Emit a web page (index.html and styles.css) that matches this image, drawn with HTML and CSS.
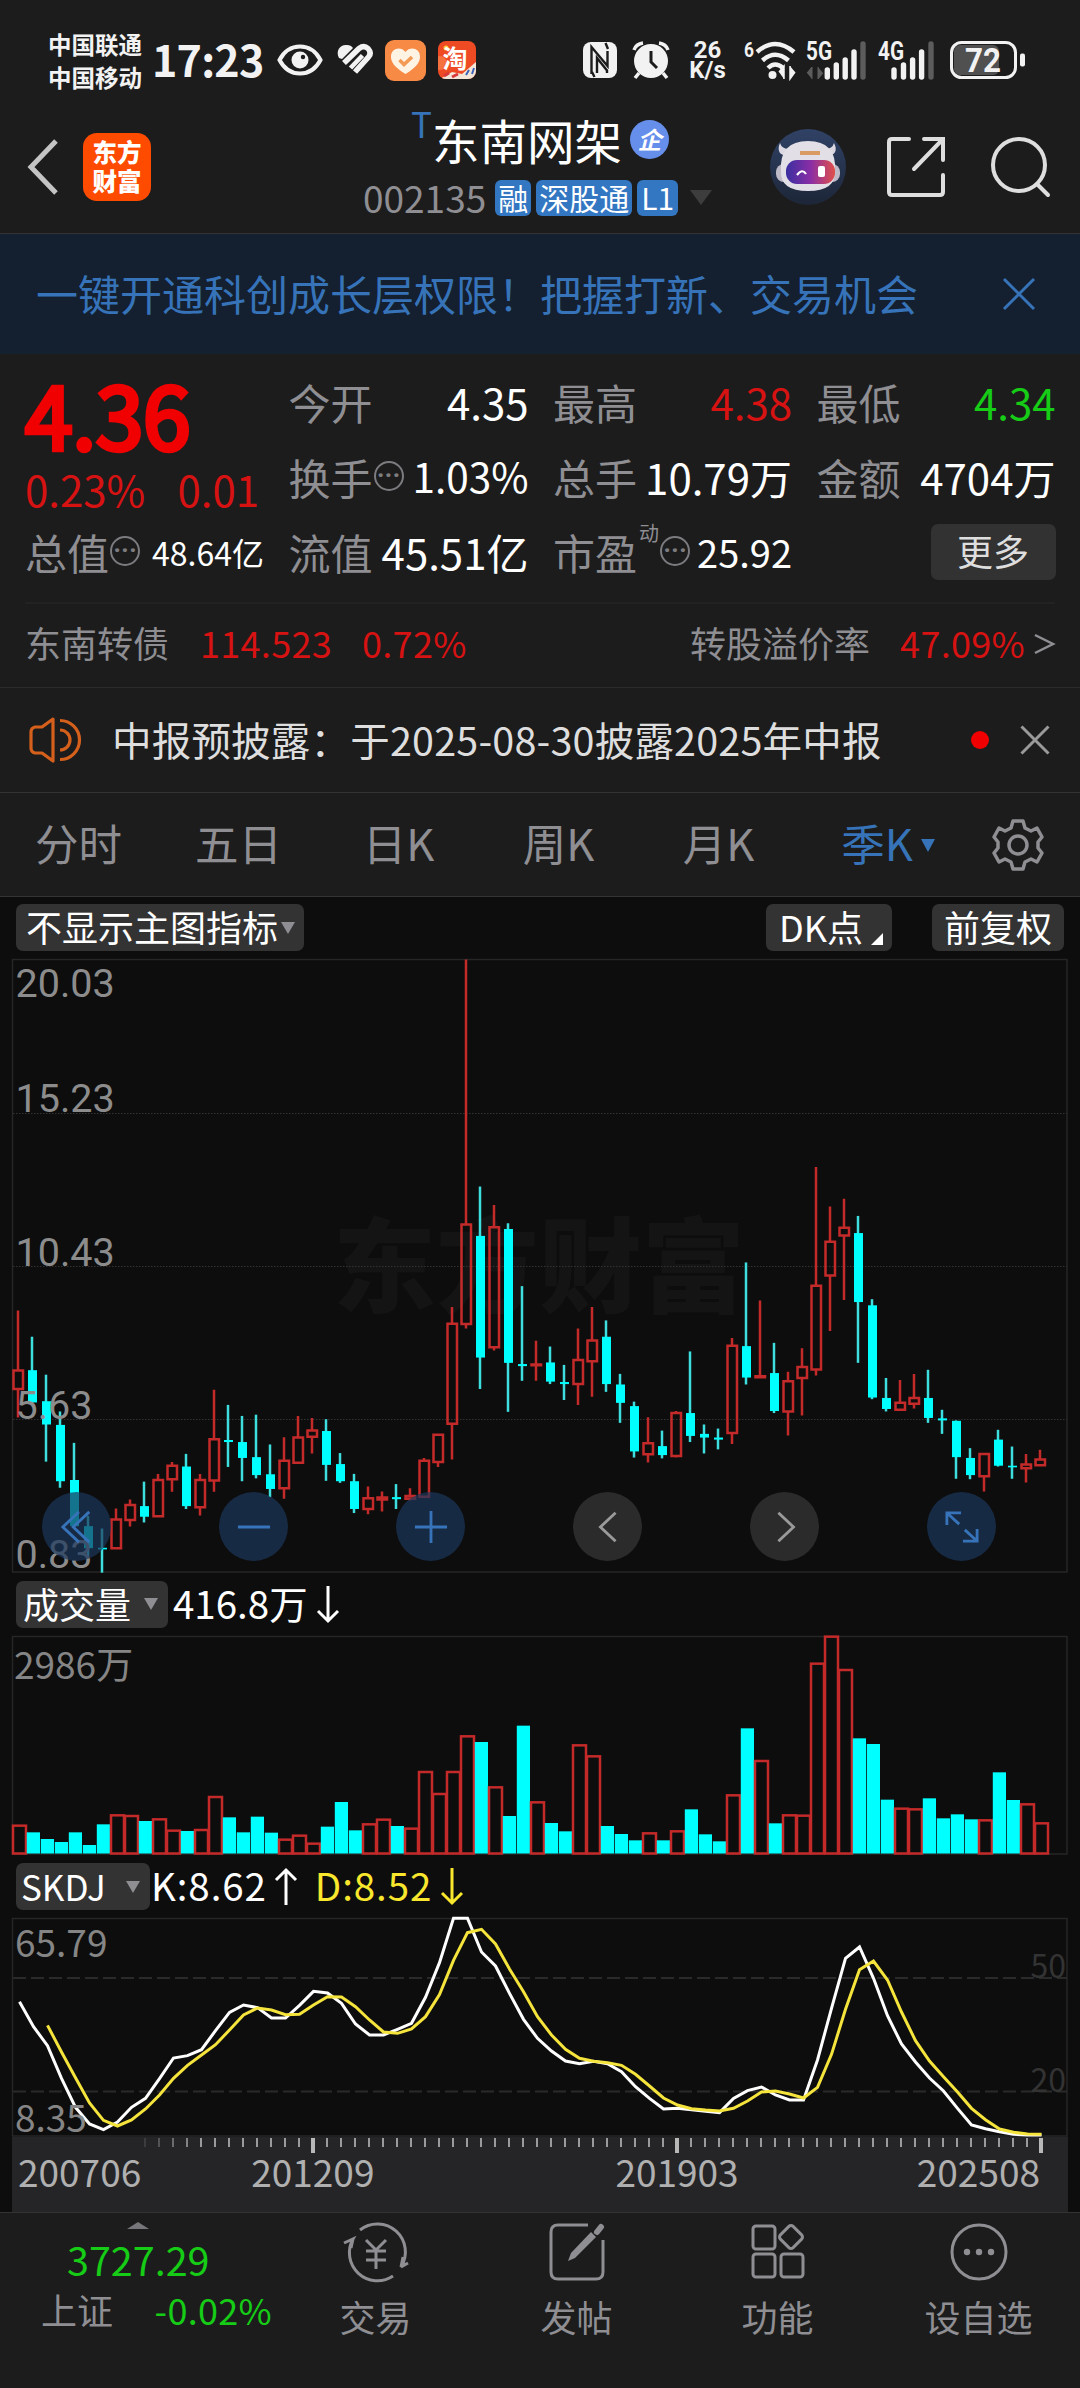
FILE: index.html
```html
<!DOCTYPE html>
<html lang="zh-CN">

<head>
  <meta charset="UTF-8" />
  <meta name="viewport" content="width=device-width, initial-scale=1.0" />
  <title>东南网架 002135</title>
  <link rel="stylesheet" href="styles.css">
</head>

<body>
  <div class="status-bar">
    <div class="carriers"><span>中国联通</span><span>中国移动</span></div>
    <div class="clock">17:23</div>
    <svg class="st-eye" width="46" height="32" viewBox="0 0 46 32">
      <path d="M2.5 16C12 -2 34 -2 43.500 16C34 34 12 34 2.500 16Z" fill="none" stroke="#f2f2f2" stroke-width="4" />
      <circle cx="23" cy="16" r="8.500" fill="#f2f2f2" />
      <circle cx="26" cy="13" r="2.200" fill="#1c1c1c" />
    </svg>
    <svg class="st-heart" width="36" height="32" viewBox="0 0 36 32">
      <path d="M2 14C-2 6 4 0 10 1Q14 1 16 4L5 15Z" fill="#f2f2f2" />
      <path d="M7 19L22 4.500Q27 1 31 4.500Q35 9 31.500 13L18 28" fill="none" stroke="#f2f2f2" stroke-width="5.600" stroke-linejoin="round" />
      <path d="M13.500 24L25.500 11.500" stroke="#f2f2f2" stroke-width="4.600" />
    </svg>
    <svg class="st-app" width="41" height="41" viewBox="0 0 41 41">
      <rect width="41" height="41" rx="9" fill="#f78a45" />
      <path d="M20.500 34C9 27 6 22 6 16.500C6 8 16 6 20.500 12C25 6 35 8 35 16.500C35 22 32 27 20.500 34Z" fill="#fff3e4" />
      <path d="M14.500 20L19 24.500L27 17" fill="none" stroke="#f39a54" stroke-width="3.500" />
    </svg>
    <svg class="st-app2" width="38" height="38" viewBox="0 0 38 38">
      <defs><clipPath id="tb"><rect width="38" height="38" rx="8" /></clipPath></defs>
      <g clip-path="url(#tb)">
        <rect width="38" height="38" fill="#ee4a24" />
        <circle cx="2" cy="22" r="7" fill="#f5713e" />
        <path d="M2 38L14 31L24 33L38 21V38Z" fill="#f3e6d8" />
        <path d="M6 35L11 32M14 36L20 33" stroke="#d83a3a" stroke-width="3" />
        <path d="M28 34L31 29M34 33L36 27" stroke="#3d63b8" stroke-width="2" />
        <circle cx="8" cy="7" r="2.500" fill="#ffcf3a" />
      </g>
      <text x="4.500" y="27" class="tb-text">淘</text>
    </svg>
    <div class="status-right">
      <svg width="34" height="36" viewBox="0 0 34 36">
        <rect x="0" y="0" width="34" height="36" rx="8" fill="#f2f2f2" />
        <path d="M8.500 32V5L24.500 24V9M11.500 35L9 30M22.500 1L25 7M14 31V16L24 28.500V31" fill="none" stroke="#1c1c1c" stroke-width="2.400" />
      </svg>
      <svg class="alarm" width="38" height="38" viewBox="0 0 38 38">
        <circle cx="19" cy="20" r="17" fill="#f2f2f2" />
        <path d="M2 9Q4 3 11 2M36 9Q34 3 27 2M7 32L3 37M31 32L35 37" fill="none" stroke="#f2f2f2" stroke-width="3.500" />
        <path d="M19 10V21L25 27" fill="none" stroke="#1c1c1c" stroke-width="3" />
      </svg>
      <div class="netspeed"><span>26</span><span>K/s</span></div>
      <svg class="wifi" width="53" height="42" viewBox="0 0 53 42">
        <text x="0" y="18" class="st-text" font-size="20" textLength="10" lengthAdjust="spacingAndGlyphs">6</text>
        <path d="M13 13Q31 -3 50 13M18.500 21.500Q31 10 44.500 21.500M24 29Q31 22 39 29" fill="none" stroke="#f2f2f2" stroke-width="4.500" />
        <circle cx="28.500" cy="36" r="4" fill="#f2f2f2" />
        <path d="M35 33L40 27V40M51 33L46 40V27" fill="#f2f2f2" stroke="#f2f2f2" stroke-width="1.500" />
      </svg>
      <svg class="signal" width="62" height="40" viewBox="0 0 62 40">
        <text x="0" y="20" class="st-text" font-size="25" textLength="26" lengthAdjust="spacingAndGlyphs">5G</text>
        <path d="M1 33L6 27V39M17 33L12 39V27" fill="#5c5c5c" stroke="#5c5c5c" />
        <path d="M21.300 30V37M30.300 25V37M39.200 20V37M48 12V37" stroke="#f2f2f2" stroke-width="5.400" stroke-linecap="round" />
        <path d="M57 4V37" stroke="#5c5c5c" stroke-width="5.400" stroke-linecap="round" />
      </svg>
      <svg class="signal2" width="58" height="40" viewBox="0 0 58 40">
        <text x="0" y="20" class="st-text" font-size="25" textLength="26" lengthAdjust="spacingAndGlyphs">4G</text>
        <path d="M16 30V37M25.500 25V37M34.600 20V37M43.600 12V37" stroke="#f2f2f2" stroke-width="5.400" stroke-linecap="round" />
        <path d="M53 4V37" stroke="#5c5c5c" stroke-width="5.400" stroke-linecap="round" />
      </svg>
      <svg class="battery" width="76" height="38" viewBox="0 0 76 38">
        <rect x="4" y="4" width="45" height="30" rx="6" fill="#505050" />
        <rect x="1.500" y="1.500" width="64" height="35" rx="10" fill="none" stroke="#f2f2f2" stroke-width="3" />
        <rect x="70" y="12.500" width="5" height="13" rx="2" fill="#f2f2f2" />
        <text x="15" y="30.500" class="st-text" font-size="33" textLength="36" lengthAdjust="spacingAndGlyphs">72</text>
      </svg>
    </div>
  </div>

  <div class="header">
    <svg class="back" width="32" height="58" viewBox="0 0 32 58">
      <path d="M29 3L4 29L29 55" fill="none" stroke="#c4c4c4" stroke-width="5" />
    </svg>
    <div class="logo"><span>东方</span><span>财富</span></div>
    <div class="stock">
      <div class="stock-name"><sup>T</sup>东南网架<i>企</i></div>
      <div class="stock-code">002135<b>融</b><b>深股通</b><b class="lv">L1</b><span class="caret"></span></div>
    </div>
    <svg class="robot" width="76" height="76" viewBox="0 0 76 76">
      <defs>
        <linearGradient id="visor" x1="0" x2="1" y1="0" y2="0">
          <stop offset="0" stop-color="#3a2fa0" />
          <stop offset="0.500" stop-color="#8a2ea6" />
          <stop offset="1" stop-color="#e0504a" />
        </linearGradient>
        <linearGradient id="halo" x1="0" x2="0" y1="0" y2="1">
          <stop offset="0" stop-color="#304266" />
          <stop offset="1" stop-color="#1d2638" />
        </linearGradient>
      </defs>
      <circle cx="38" cy="38" r="38" fill="url(#halo)" />
      <path d="M18 27Q5 26 10 14Q12 21 22 20ZM56 27Q70 26 64 14Q62 21 53 20Z" fill="#dcd8e2" />
      <rect x="6" y="35" width="64" height="18" rx="8" fill="#bfbac8" />
      <path d="M11 42Q9 12 38 12Q67 12 65 42Q66 62 38 62Q10 62 11 42Z" fill="#e2dfe6" />
      <path d="M30 24H50" stroke="#d99b62" stroke-width="4" />
      <rect x="16" y="31" width="49" height="24" rx="11" fill="url(#visor)" />
      <path d="M27 46Q32 39 36 45" fill="none" stroke="#fff" stroke-width="2.200" />
      <rect x="48" y="37" width="7" height="11" rx="2" fill="#fff" />
    </svg>
    <svg class="share" width="58" height="60" viewBox="0 0 58 60">
      <path d="M22 2H5Q2 2 2 5V55Q2 58 5 58H53Q56 58 56 55V38M37 2H56V23M56 2L27 32" fill="none" stroke="#dedede" stroke-width="4" stroke-linecap="round" />
    </svg>
    <svg class="search" width="60" height="62" viewBox="0 0 60 62">
      <circle cx="28" cy="29" r="26" fill="none" stroke="#dedede" stroke-width="4" />
      <path d="M46 48L57 59" stroke="#dedede" stroke-width="4" stroke-linecap="round" />
    </svg>
  </div>

  <div class="banner">
    <span>一键开通科创成长层权限！把握打新、交易机会</span>
    <svg width="34" height="34" viewBox="0 0 34 34"><path d="M2 2L32 32M32 2L2 32" stroke="#3673b9" stroke-width="3" /></svg>
  </div>

  <div class="quote">
    <div class="price-box">
      <div class="price">4.36</div>
      <div class="change"><span>0.23%</span><span>0.01</span></div>
    </div>
    <div class="item"><label>今开</label><em>4.35</em></div>
    <div class="item"><label>最高</label><em class="red">4.38</em></div>
    <div class="item"><label>最低</label><em class="green">4.34</em></div>
    <div class="item"><label>换手</label><span class="more-dots">···</span><em class="narrow">1.03%</em></div>
    <div class="item"><label>总手</label><em>10.79万</em></div>
    <div class="item"><label>金额</label><em>4704万</em></div>
    <div class="item"><label>总值</label><span class="more-dots">···</span><em class="small">48.64亿</em></div>
    <div class="item"><label>流值</label><em>45.51亿</em></div>
    <div class="item"><label>市盈<sup>动</sup></label><span class="more-dots">···</span><em class="mid">25.92</em></div>
    <div class="item end"><button class="more-btn">更多</button></div>
  </div>

  <div class="bond">
    <span>东南转债</span>
    <span class="red bond-price">114.523</span>
    <span class="red">0.72%</span>
    <span class="premium">转股溢价率</span>
    <span class="red">47.09%</span>
    <svg width="21" height="22" viewBox="0 0 21 22"><path d="M1 2L19 11L1 20" fill="none" stroke="#8e8e93" stroke-width="2.500" /></svg>
  </div>

  <div class="notice">
    <svg width="52" height="46" viewBox="0 0 52 46">
      <path d="M24 2L13 10H6Q2 11 2 15V31Q2 35 6 36H13L24 44Z" fill="none" stroke="#d5601c" stroke-width="3.200" stroke-linejoin="round" />
      <path d="M31 3.500A19.500 19.500 0 0 1 31 42.500M31 13A10 10 0 0 1 31 33" fill="none" stroke="#d5601c" stroke-width="3.200" />
    </svg>
    <span class="notice-text">中报预披露：于2025-08-30披露2025年中报</span>
    <span class="dot"></span>
    <svg width="30" height="30" viewBox="0 0 30 30"><path d="M1.500 1.500L28.500 28.500M28.500 1.500L1.500 28.500" stroke="#9a9a9a" stroke-width="3" /></svg>
  </div>

  <div class="tabs">
    <span>分时</span><span>五日</span><span>日K</span><span>周K</span><span>月K</span><span class="active">季K</span>
    <svg width="52" height="52" viewBox="0 0 52 52">
      <path d="M21 2H31L33 9L39 12L45 9L50 18L46 23V29L50 34L45 43L39 40L33 43L31 50H21L19 43L13 40L7 43L2 34L6 29V23L2 18L7 9L13 12L19 9Z" fill="none" stroke="#8e8e93" stroke-width="3.500" stroke-linejoin="round" />
      <circle cx="26" cy="26" r="9" fill="none" stroke="#8e8e93" stroke-width="3.500" />
    </svg>
  </div>

  <div class="charts">
    <div class="toolbar">
      <button class="chip main-chip">不显示主图指标<span class="tri"></span></button>
      <button class="chip dk">DK点<span class="corner"></span></button>
      <button class="chip fq">前复权</button>
    </div>

    <div class="kline">
      <svg width="1056" height="613" viewBox="12 959 1056 613">
        <text class="watermark" x="333" y="1305">东方财富</text>
        <path class="frame" d="M12.500 959.500H1067V1572H12.500Z" />
        <path class="grid-dot" d="M13 1113.500H1067M13 1266.500H1067M13 1419.500H1067" />
        <g id="candles"></g>
        <g class="price-labels">
          <text x="15.500" y="997">20.03</text>
          <text x="15.500" y="1112">15.23</text>
          <text x="15.500" y="1266">10.43</text>
          <text x="15.500" y="1419">5.63</text>
          <text x="15.500" y="1568">0.83</text>
        </g>
      </svg>
      <div class="controls">
        <span class="ctl"><svg viewBox="0 0 36 36"><path d="M20 2L3 18L20 34M31 2L14 18L31 34" /></svg></span>
        <span class="ctl"><svg viewBox="0 0 36 36"><path d="M1 18H35" /></svg></span>
        <span class="ctl"><svg viewBox="0 0 36 36"><path d="M1 18H35M18 1V35" /></svg></span>
        <span class="ctl gray"><svg viewBox="0 0 36 36"><path d="M26 3L10 18L26 33" /></svg></span>
        <span class="ctl gray"><svg viewBox="0 0 36 36"><path d="M11 3L27 18L11 33" /></svg></span>
        <span class="ctl"><svg viewBox="0 0 36 36"><path d="M2 16V3H17M3 4L15 15M34 20V33H19M33 32L21 21" /></svg></span>
      </div>
    </div>

    <div class="ind-row">
      <button class="chip vol-chip">成交量<span class="tri"></span></button>
      <span class="ind-val">416.8万</span>
      <svg class="arrow" width="22" height="37" viewBox="0 0 22 37"><path d="M11 0V35M1 25L11 35L21 25" /></svg>
    </div>
    <svg class="plot" width="1056" height="219" viewBox="12 1636 1056 219">
      <path class="frame" d="M12.500 1636.500H1067V1854H12.500Z" />
      <text class="axis-label" x="14" y="1679">2986万</text>
      <g id="volumes"></g>
    </svg>

    <div class="ind-row skdj-row">
      <button class="chip skdj-chip">SKDJ<span class="tri"></span></button>
      <span class="ind-val k-val">K:8.62</span>
      <svg class="arrow up-arrow" width="22" height="37" viewBox="0 0 22 37"><path d="M11 37V2M1 12L11 2L21 12" /></svg>
      <span class="ind-val yellow">D:8.52</span>
      <svg class="arrow yellow" width="22" height="37" viewBox="0 0 22 37"><path d="M11 0V35M1 25L11 35L21 25" /></svg>
    </div>
    <svg class="plot" width="1056" height="219" viewBox="12 1918 1056 219">
      <path class="frame" d="M12.500 1918.500H1067V2136H12.500Z" />
      <path class="grid-dash" d="M13 1978H1067M13 2091.500H1067" />
      <text class="level" x="1066" y="1978">50</text>
      <text class="level" x="1066" y="2092">20</text>
      <g id="skdj"></g>
      <text class="axis-label" x="15" y="1957">65.79</text>
      <text class="axis-label" x="15" y="2132">8.35</text>
    </svg>

    <div class="time-axis">
      <svg width="1056" height="16" viewBox="12 0 1056 16"><g id="ticks"></g></svg>
      <div class="dates"><span>200706</span><span>201209</span><span>201903</span><span>202508</span></div>
    </div>
  </div>

  <div class="bottom-nav">
    <div class="index-box">
      <span class="up-tri"></span>
      <div class="index-val">3727.29</div>
      <div class="index-row"><span>上证</span><span class="green">-0.02%</span></div>
    </div>
    <div class="nav-item">
      <svg width="66" height="60" viewBox="0 0 66 60">
        <path d="M17 7A28 28 0 0 1 58 44L65 40M58 44L60 34M50 53A28 28 0 0 1 10 16L1 20M10 16L8 25" fill="none" />
        <path d="M23 17L33 27L43 17M33 27V46M23 28H43M23 37H43" fill="none" />
      </svg>
      <span>交易</span>
    </div>
    <div class="nav-item">
      <svg width="56" height="58" viewBox="0 0 56 58">
        <path d="M39 2H9Q2 2 2 9V49Q2 56 9 56H47Q54 56 54 49V17" fill="none" />
        <path d="M19 38L22 30L42 9L47 14L26 35Z" fill="#8e8e93" stroke="none" />
        <path d="M48 9L52 4" stroke-width="6" stroke-linecap="round" />
      </svg>
      <span>发帖</span>
    </div>
    <div class="nav-item">
      <svg width="54" height="56" viewBox="0 0 54 56">
        <rect x="2" y="3" width="22" height="23" rx="3" fill="none" />
        <rect x="2" y="31" width="22" height="23" rx="3" fill="none" />
        <rect x="30" y="31" width="22" height="23" rx="3" fill="none" />
        <rect x="31" y="5" width="18" height="18" rx="3" fill="none" transform="rotate(45 40 14)" />
      </svg>
      <span>功能</span>
    </div>
    <div class="nav-item">
      <svg width="58" height="58" viewBox="0 0 58 58">
        <circle cx="29" cy="29" r="27" fill="none" />
        <g fill="#8e8e93" stroke="none">
          <circle cx="17" cy="29" r="3.200" />
          <circle cx="29" cy="29" r="3.200" />
          <circle cx="41" cy="29" r="3.200" />
        </g>
      </svg>
      <span>设自选</span>
    </div>
  </div>

  <script src="chart.js"></script>
</body>

</html>
```
FILE: styles.css
```css
:root {
  --panel: #1c1c1c;
  --chart-bg: #0d0d0d;
  --gray: #8e8e93;
  --red: #d61212;
  --green: #16cc16;
  --blue: #3673b9;
  --line: #333333;
}

* {
  box-sizing: border-box;
}

body {
  margin: 0;
  width: 1080px;
  height: 2388px;
  overflow: hidden;
  background: var(--panel);
  color: #fff;
  font-family: 'Noto Sans CJK SC', 'Noto Sans', sans-serif;
  line-height: 1;
  white-space: nowrap;
}

svg {
  display: block;
  flex: none;
  overflow: visible;
}

button {
  font-family: inherit;
  line-height: 1;
  border: none;
  padding: 0;
}

.red {
  color: var(--red);
}

.green {
  color: var(--green);
}

/* status bar */
.status-bar {
  height: 100px;
  padding: 20px 54px 0 48px;
  display: flex;
  align-items: center;
  color: #f2f2f2;
}

.carriers {
  width: 104px;
  display: flex;
  flex-direction: column;
  font-size: 23.5px;
  font-weight: bold;
  line-height: 33px;
  padding-top: 1px;
}

.clock {
  width: 125px;
  padding-bottom: 4px;
  font-size: 43px;
  font-weight: bold;
  letter-spacing: -0.8px;
}

.st-heart {
  margin-left: 14px;
}

.st-app {
  margin-left: 12px;
}

.st-app2 {
  margin-left: 12px;
}

.tb-text {
  font-size: 25px;
  font-weight: bold;
  fill: #fff;
}

.status-right {
  margin-left: auto;
  display: flex;
  align-items: center;
}

.alarm {
  margin-left: 15px;
}

.netspeed {
  width: 54px;
  margin-left: 2px;
  padding-left: 17px;
  display: flex;
  flex-direction: column;
  align-items: center;
  font: bold 24px/20px Roboto, sans-serif;
}

.wifi {
  margin-left: 18px;
}

.signal {
  margin-left: 9px;
}

.signal2 {
  margin-left: 10px;
}

.battery {
  margin-left: 14px;
}

.st-text {
  font-family: Roboto, sans-serif;
  font-weight: bold;
  fill: #f2f2f2;
}

/* header */
.header {
  height: 134px;
  border-bottom: 1px solid var(--line);
  padding: 0 29px 0 27px;
  display: flex;
  align-items: center;
}

.logo {
  width: 68px;
  height: 68px;
  margin-left: 24px;
  padding-bottom: 2px;
  border-radius: 14px;
  background: #ff4b00;
  display: flex;
  flex-direction: column;
  align-items: center;
  justify-content: center;
  font-size: 24.5px;
  font-weight: 900;
  line-height: 29px;
}

.stock {
  margin-left: 212px;
  width: 359px;
}

.stock-name {
  display: flex;
  align-items: center;
  height: 62px;
  padding-left: 48px;
  font-size: 47.5px;
}

.stock-name sup {
  width: 21px;
  margin-top: -35px;
  font-size: 35px;
  line-height: 1;
  color: var(--blue);
}

.stock-name i {
  width: 39px;
  height: 39px;
  margin-left: 8px;
  border-radius: 50%;
  background: #668eeb;
  font-size: 24px;
  font-weight: bold;
  line-height: 38px;
  text-align: center;
}

.stock-code {
  display: flex;
  align-items: center;
  height: 54px;
  font-size: 37px;
  color: var(--gray);
}

.stock-code b {
  height: 36px;
  margin-left: 5px;
  padding: 0 3px;
  border-radius: 6px;
  background: #3376c2;
  color: #fff;
  font-size: 30px;
  font-weight: normal;
  line-height: 34px;
}

.stock-code b:first-of-type {
  margin-left: 9px;
}

.stock-code .lv {
  padding: 0 4px;
}

.caret {
  margin-left: 12px;
  border: 11px solid transparent;
  border-top: 15px solid #3d3d3d;
  border-bottom: none;
}

.robot {
  margin-left: 48px;
}

.share {
  margin-left: 41px;
}

.search {
  margin-left: auto;
}

/* banner */
.banner {
  height: 120px;
  padding: 0 44px 0 36px;
  display: flex;
  align-items: center;
  justify-content: space-between;
  background: #14202f;
  color: var(--blue);
  font-size: 42px;
}

.banner span {
  padding-bottom: 3px;
}

/* quote */
.quote {
  height: 250px;
  margin: 0 25px;
  padding-top: 10px;
  display: grid;
  grid-template-columns: 239px 240px 239px 239px;
  grid-template-rows: 75px 75px 75px;
  column-gap: 24.500px;
  border-bottom: 2px solid #222;
}

.price-box {
  grid-row: span 2;
  color: #f00000;
}

.price {
  height: 100px;
  font-size: 86px;
  line-height: 97px;
  letter-spacing: -0.5px;
  -webkit-text-stroke: 4.5px #f00000;
}

.change {
  width: 234px;
  display: flex;
  justify-content: space-between;
  font-size: 42px;
  line-height: 50px;
  color: var(--red);
}

.item {
  display: flex;
  align-items: center;
  font-size: 42px;
}

.item label {
  display: flex;
  color: var(--gray);
}

.item label sup {
  font-size: 20px;
  margin: -8px 0 0 2px;
  line-height: 1;
}

.item em {
  margin-left: auto;
  font-style: normal;
}

.item .narrow {
  font-size: 40.500px;
}

.item .small {
  font-size: 32px;
}

.item .mid {
  font-size: 38px;
}

.item.end {
  justify-content: flex-end;
}

.more-dots {
  width: 30px;
  height: 30px;
  margin: -1px 0 0 1px;
  border: 2px solid #7c7c80;
  border-radius: 50%;
  color: #7c7c80;
  font: bold 26px/24px Roboto, sans-serif;
  text-align: center;
  letter-spacing: 0;
  display: flex;
  justify-content: center;
}

.more-btn {
  width: 125px;
  height: 56px;
  padding-bottom: 3px;
  border-radius: 7px;
  background: #323232;
  color: #dedede;
  font-size: 36px;
}

/* bond */
.bond {
  height: 84px;
  padding: 0 25px 8px;
  border-bottom: 1px solid #2b2b2b;
  display: flex;
  align-items: center;
  font-size: 36px;
  color: var(--gray);
}

.bond .red {
  letter-spacing: 0.3px;
}

.bond-price {
  margin: 0 30px 0 31px;
}

.premium {
  margin: 0 30px 0 auto;
}

.bond svg {
  margin: 4px 0 0 9px;
}

/* notice */
.notice {
  height: 105px;
  padding: 0 30px 0 29px;
  border-bottom: 1px solid var(--line);
  display: flex;
  align-items: center;
}

.notice-text {
  margin-left: 31px;
  padding-bottom: 3px;
  font-size: 39.500px;
  letter-spacing: 0.2px;
  color: #dedede;
}

.dot {
  width: 18px;
  height: 18px;
  margin: 0 31px 0 auto;
  border-radius: 50%;
  background: #f00000;
}

/* tabs */
.tabs {
  height: 104px;
  border-bottom: 1px solid var(--line);
  display: flex;
  align-items: center;
  font-size: 43.5px;
  color: var(--gray);
}

.tabs span {
  width: 160px;
  padding: 0 3px 3px 0;
  text-align: center;
}

.tabs .active {
  padding-right: 7px;
  color: var(--blue);
}

.tabs .active::after {
  content: "";
  display: inline-block;
  margin: 0 -23px 9px 8px;
  border: 7.500px solid transparent;
  border-top: 13px solid var(--blue);
  border-bottom: none;
}

.tabs svg {
  margin-left: 32px;
}

/* charts */
.charts {
  background: var(--chart-bg);
  padding-left: 12px;
}

.toolbar {
  height: 62px;
  padding: 7px 16px 0 4px;
  display: flex;
  align-items: flex-start;
}

.chip {
  height: 47px;
  border-radius: 7px;
  background: #333;
  color: #fff;
  font-size: 36px;
  display: flex;
  align-items: center;
  padding: 0 0 3px 7px;
}

.tri {
  margin-top: 3px;
  border: 7px solid transparent;
  border-top: 12px solid var(--gray);
  border-bottom: none;
}

.main-chip {
  width: 288px;
  padding-left: 10px;
}

.main-chip .tri {
  margin-left: 3px;
}

.dk {
  width: 126px;
  margin-left: auto;
  padding-left: 13px;
}

.corner {
  align-self: flex-end;
  margin: 0 0 3px 8px;
  border-left: 12px solid transparent;
  border-bottom: 12px solid #fff;
}

.fq {
  width: 132px;
  margin-left: 40px;
  padding-left: 12px;
}

.kline {
  position: relative;
  height: 613px;
}

.controls {
  position: absolute;
  left: 30px;
  right: 84px;
  bottom: 11px;
  display: flex;
  justify-content: space-between;
}

.ctl {
  width: 69px;
  height: 69px;
  border-radius: 50%;
  background: rgba(28, 56, 92, 0.7);
  display: flex;
  align-items: center;
  justify-content: center;
}

.ctl svg {
  width: 34px;
  height: 34px;
  fill: none;
  stroke: var(--blue);
  stroke-width: 3;
}

.ctl.gray {
  background: #2b2b2b;
}

.ctl.gray svg {
  stroke: #9a9a9a;
}

.frame {
  fill: none;
  stroke: #262626;
  stroke-width: 1.500;
}

.grid-dot {
  stroke: #333;
  stroke-dasharray: 1.500 1.500;
}

.grid-dash {
  stroke: #2a2a2a;
  stroke-width: 2;
  stroke-dasharray: 13 5;
}

.watermark {
  font-size: 103px;
  font-weight: 900;
  fill: #141414;
}

.price-labels text {
  font-family: Roboto, sans-serif;
  font-size: 39.500px;
  fill: #8c8c8c;
}

.axis-label {
  font-size: 37px;
  fill: #858585;
}

.level {
  font-size: 32px;
  fill: #333;
  text-anchor: end;
}

.ind-row {
  height: 64px;
  padding-left: 4px;
  display: flex;
  align-items: center;
}

.skdj-row {
  height: 63px;
}

.vol-chip {
  width: 152px;
  justify-content: space-between;
  padding-right: 10px;
}

.skdj-chip {
  width: 134px;
  justify-content: space-between;
  padding: 0 10px 3px 5px;
  font-size: 35px;
}

.ind-val {
  margin-left: 5px;
  padding-bottom: 4px;
  font-size: 38.500px;
}

.skdj-row .ind-val {
  letter-spacing: 0.9px;
}

.ind-val.k-val {
  margin-left: 1px;
}

.arrow {
  margin-left: 9px;
  fill: none;
  stroke: #fff;
  stroke-width: 3;
}

.up-arrow {
  margin-left: 8px;
}

.yellow {
  color: #f8e72d;
}

.ind-val.yellow {
  margin-left: 18px;
}

.arrow.yellow {
  stroke: #f8e72d;
}

.up {
  fill: none;
  stroke: #c42a2a;
  stroke-width: 2.500;
}

.down {
  fill: #00ffff;
}

.wick {
  stroke: #3fdede;
  stroke-width: 2.500;
}

.k-line,
.d-line {
  fill: none;
  stroke: #fff;
  stroke-width: 3;
}

.d-line {
  stroke: #f5e43c;
}

.tick {
  stroke: #9b9b9b;
  stroke-width: 2;
}

.tick.major {
  stroke: #b8b8b8;
  stroke-width: 4;
}

.time-axis {
  width: 1056px;
  height: 75px;
  background: #252527;
}

.dates {
  padding: 0 28px 0 6px;
  display: flex;
  font-size: 37px;
  line-height: 36px;
  color: #b0b0b0;
}

.dates span:nth-child(2) {
  margin-left: 110px;
}

.dates span:nth-child(3) {
  margin-left: 241px;
}

.dates span:nth-child(4) {
  margin-left: auto;
}

/* bottom nav */
.bottom-nav {
  height: 176px;
  border-top: 1px solid var(--line);
  display: flex;
}

.index-box {
  width: 275px;
  padding-top: 9px;
}

.up-tri {
  display: block;
  width: 0;
  margin-left: 127px;
  border: 11px solid transparent;
  border-top: none;
  border-bottom: 7px solid #77777b;
}

.index-val {
  padding-left: 67px;
  font-size: 39.500px;
  line-height: 60px;
  color: var(--green);
}

.index-row {
  padding: 0 3px 0 41px;
  display: flex;
  justify-content: space-between;
  font-size: 36px;
  line-height: 40px;
  color: var(--gray);
}

.index-row .green {
  letter-spacing: 0.3px;
}

.nav-item {
  width: 201px;
  display: flex;
  flex-direction: column;
  align-items: center;
  justify-content: space-between;
  height: 130px;
  padding-top: 10px;
  font-size: 36px;
  line-height: 54px;
  color: var(--gray);
}

.nav-item svg {
  stroke: #8e8e93;
  stroke-width: 3;
}
```
FILE: chart.js
```js
const svgNS = 'http://www.w3.org/2000/svg';
const STEP = 14;
const FIRST_X = 18;

function add(parent, tag, attrs) {
  const el = document.createElementNS(svgNS, tag);
  for (const key in attrs) el.setAttribute(key, attrs[key]);
  parent.appendChild(el);
}

// [high, body top, body bottom, low, up?]
const candles = [
  [908, 1055, 1100, 1170, 1], [972, 1054, 1133, 1133, 0], [1065, 1130, 1187, 1278, 0], [1155, 1188, 1326, 1342, 0],
  [1232, 1323, 1436, 1440, 0], [1411, 1436, 1490, 1510, 0], [1442, 1489, 1493, 1550, 0], [1393, 1420, 1490, 1490, 1],
  [1371, 1384, 1421, 1437, 1], [1327, 1387, 1413, 1427, 0], [1308, 1323, 1412, 1412, 1], [1279, 1288, 1321, 1352, 1],
  [1259, 1290, 1387, 1394, 0], [1308, 1323, 1390, 1410, 1], [1102, 1223, 1324, 1352, 1], [1139, 1225, 1230, 1291, 0],
  [1166, 1230, 1269, 1326, 0], [1163, 1267, 1311, 1319, 0], [1236, 1309, 1345, 1365, 0], [1218, 1276, 1343, 1369, 1],
  [1166, 1219, 1281, 1283, 1], [1171, 1202, 1217, 1258, 1], [1174, 1203, 1286, 1325, 0], [1257, 1284, 1326, 1330, 0],
  [1308, 1326, 1394, 1404, 0], [1339, 1368, 1394, 1407, 1], [1351, 1366, 1371, 1400, 1], [1333, 1365, 1370, 1394, 0],
  [1343, 1362, 1369, 1373, 1], [1269, 1276, 1364, 1364, 1], [1211, 1212, 1279, 1291, 1], [899, 940, 1185, 1273, 1],
  [48, 697, 941, 952, 1], [604, 725, 1023, 1100, 0], [649, 704, 998, 1006, 1], [694, 708, 1036, 1156, 0],
  [848, 1039, 1044, 1080, 0], [982, 1040, 1042, 1080, 1], [996, 1035, 1082, 1088, 0], [1041, 1083, 1088, 1127, 0],
  [952, 1029, 1088, 1139, 1], [899, 981, 1032, 1119, 1], [932, 972, 1088, 1107, 0], [1063, 1089, 1134, 1183, 0],
  [1131, 1142, 1253, 1268, 0], [1169, 1233, 1260, 1280, 1], [1202, 1240, 1262, 1270, 0], [1154, 1159, 1264, 1268, 1],
  [1008, 1159, 1215, 1230, 0], [1187, 1210, 1219, 1258, 0], [1197, 1219, 1224, 1248, 0], [975, 994, 1208, 1235, 1],
  [790, 995, 1072, 1089, 0], [883, 1069, 1071, 1071, 1], [987, 1061, 1154, 1159, 0], [1058, 1081, 1155, 1214, 1],
  [1000, 1046, 1073, 1165, 1], [556, 847, 1052, 1067, 1], [653, 739, 822, 958, 1], [634, 705, 724, 882, 1],
  [676, 718, 887, 1036, 0], [880, 895, 1121, 1125, 0], [1073, 1122, 1149, 1155, 0], [1078, 1134, 1151, 1151, 1],
  [1063, 1122, 1136, 1148, 1], [1053, 1122, 1171, 1183, 0], [1151, 1172, 1177, 1210, 0], [1177, 1178, 1267, 1320, 0],
  [1245, 1269, 1311, 1321, 0], [1258, 1259, 1314, 1351, 1], [1200, 1224, 1288, 1290, 0], [1241, 1288, 1292, 1320, 0],
  [1259, 1285, 1294, 1329, 1], [1249, 1273, 1287, 1287, 1]
];

const volumes = [
  767, 787, 807, 816, 787, 825, 763, 736, 738, 753, 748, 782, 783, 780, 681, 742, 787, 740, 788, 809,
  797, 821, 770, 696, 781, 763, 749, 768, 776, 606, 672, 606, 499, 516, 652, 738, 467, 697, 759, 784,
  526, 559, 768, 792, 811, 790, 811, 784, 718, 793, 814, 676, 475, 573, 760, 736, 737, 281, 200, 300,
  505, 522, 689, 716, 718, 685, 745, 733, 748, 751, 607, 690, 703, 760
];

const kValues = [
  365, 440, 497, 595, 682, 732, 749, 726, 682, 655, 596, 534, 527, 509, 452, 397, 375, 383, 414, 414,
  376, 334, 339, 370, 432, 465, 465, 448, 430, 352, 248, 115, 115, 216, 258, 340, 418, 475, 513, 543,
  551, 544, 551, 575, 620, 655, 687, 685, 689, 694, 698, 655, 632, 621, 645, 660, 660, 540, 385, 235,
  201, 295, 407, 492, 546, 594, 633, 685, 735, 746, 755, 763, 765, 765
];

// starts two periods after K
const dValues = [
  436, 516, 593, 669, 721, 738, 720, 687, 645, 595, 556, 525, 494, 450, 405, 384, 390, 404, 403, 375,
  350, 351, 380, 420, 456, 460, 447, 410, 344, 241, 158, 148, 192, 267, 335, 410, 465, 508, 535, 544,
  548, 556, 583, 618, 654, 675, 686, 690, 693, 685, 663, 636, 633, 642, 654, 622, 523, 388, 269, 243,
  300, 396, 482, 543, 590, 636, 685, 719, 747, 757, 762, 763
];

const priceY = v => 940 + v / 2.45;
const volumeY = v => 1570 + v / 3;
const skdjY = v => 1880 + v / 3;

const candleGroup = document.getElementById('candles');
candles.forEach(([high, top, bottom, low, up], i) => {
  const x = FIRST_X + i * STEP;
  const y1 = priceY(top);
  const y2 = priceY(bottom);
  if (up) {
    add(candleGroup, 'path', {
      class: 'up',
      d: `M${x} ${priceY(high)}V${y1}M${x} ${y2}V${priceY(low)}M${x - 4.5} ${y1}H${x + 5}V${y2}H${x - 4.5}Z`
    });
  } else {
    add(candleGroup, 'path', { class: 'wick', d: `M${x} ${priceY(high)}V${priceY(low)}` });
    add(candleGroup, 'rect', { class: 'down', x: x - 4, y: y1, width: 9, height: y2 - y1 });
  }
});

const volumeGroup = document.getElementById('volumes');
volumes.forEach((v, i) => {
  const x = 12 + i * STEP;
  const y = volumeY(v);
  if (candles[i][4]) {
    add(volumeGroup, 'rect', { class: 'up', x: x + 1, y: y, width: 13, height: 1853.5 - y });
  } else {
    add(volumeGroup, 'rect', { class: 'down', x: x + 0.8, y: y, width: 13.2, height: 1853.5 - y });
  }
});

const skdjGroup = document.getElementById('skdj');
const toPoints = (values, offset) => values.map((v, i) => `${19.5 + (i + offset) * STEP},${skdjY(v)}`).join(' ');
add(skdjGroup, 'polyline', { class: 'k-line', points: toPoints(kValues, 0) });
add(skdjGroup, 'polyline', { class: 'd-line', points: toPoints(dValues, 2) });

const tickGroup = document.getElementById('ticks');
for (let i = 9; i < candles.length; i++) {
  const major = i === 21 || i === 47 || i === 73;
  add(tickGroup, 'path', {
    class: major ? 'tick major' : 'tick',
    opacity: Math.min(1, (i - 8) * 0.2),
    d: `M${19 + i * STEP} 1V${major ? 16 : 10}`
  });
}
```
